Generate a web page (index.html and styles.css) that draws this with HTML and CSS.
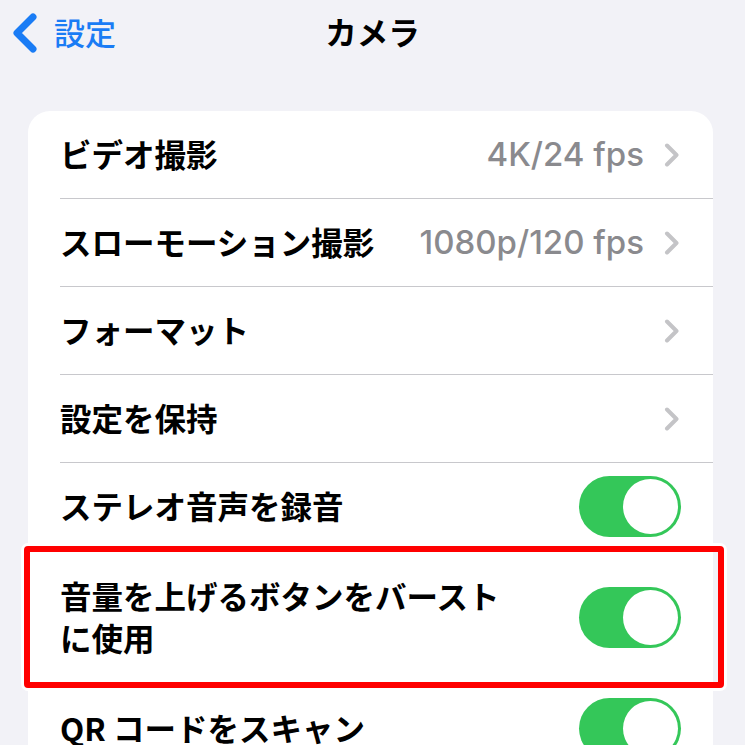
FILE: index.html
```html
<!DOCTYPE html>
<html lang="ja">
<head>
<meta charset="utf-8">
<link rel="stylesheet" href="styles.css">
</head>
<body>
<div class="screen">
  <header class="nav">
    <div class="nav-left">
      <svg class="back-icon" width="30" height="42" viewBox="10 10 30 42"><path d="M33 15 L17 31 L33 47" fill="none" stroke="#1a7cf5" stroke-width="7" stroke-linecap="round" stroke-linejoin="round"/></svg>
      <span class="back-label">設定</span>
    </div>
    <div class="nav-title">カメラ</div>
    <div class="nav-right"></div>
  </header>

  <section class="card">
    <div class="row">
      <span class="label">ビデオ撮影</span>
      <span class="value">4K/24 fps</span>
      <svg class="chev" width="16" height="24" viewBox="0 0 16 24"><path d="M3 2.5 L12.5 12 L3 21.5" fill="none" stroke="#c4c4c7" stroke-width="4" stroke-linecap="round" stroke-linejoin="round"/></svg>
    </div>
    <div class="row">
      <span class="label">スローモーション撮影</span>
      <span class="value">1080p/120 fps</span>
      <svg class="chev" width="16" height="24" viewBox="0 0 16 24"><path d="M3 2.5 L12.5 12 L3 21.5" fill="none" stroke="#c4c4c7" stroke-width="4" stroke-linecap="round" stroke-linejoin="round"/></svg>
    </div>
    <div class="row">
      <span class="label">フォーマット</span>
      <span class="value"></span>
      <svg class="chev" width="16" height="24" viewBox="0 0 16 24"><path d="M3 2.5 L12.5 12 L3 21.5" fill="none" stroke="#c4c4c7" stroke-width="4" stroke-linecap="round" stroke-linejoin="round"/></svg>
    </div>
    <div class="row">
      <span class="label">設定を保持</span>
      <span class="value"></span>
      <svg class="chev" width="16" height="24" viewBox="0 0 16 24"><path d="M3 2.5 L12.5 12 L3 21.5" fill="none" stroke="#c4c4c7" stroke-width="4" stroke-linecap="round" stroke-linejoin="round"/></svg>
    </div>
    <div class="row">
      <span class="label">ステレオ音声を録音</span>
      <span class="toggle"><span class="knob"></span></span>
    </div>
    <div class="row row-tall">
      <span class="label label-wrap">音量を上げるボタンをバースト<br>に使用</span>
      <span class="toggle"><span class="knob"></span></span>
      <span class="highlight"></span>
    </div>
    <div class="row">
      <span class="label">QR コードをスキャン</span>
      <span class="toggle"><span class="knob"></span></span>
    </div>
  </section>
</div>
</body>
</html>
```

FILE: styles.css
```css
html, body {
  margin: 0;
  padding: 0;
  background: #f2f2f7;
}
.screen {
  width: 745px;
  height: 745px;
  overflow: hidden;
  background: #f2f2f7;
  font-family: "Noto Sans CJK JP", "Noto Sans", sans-serif;
}
.nav {
  height: 66px;
  display: grid;
  grid-template-columns: 1fr auto 1fr;
  align-items: center;
}
.nav-left {
  display: flex;
  align-items: center;
  padding-left: 10px;
  gap: 14px;
}
.back-icon {
  display: block;
}
.back-label {
  color: #1a7cf5;
  font-size: 31px;
  font-weight: 500;
  line-height: 1;
  padding-bottom: 3px;
}
.nav-title {
  font-size: 31.5px;
  font-weight: 700;
  color: #000;
  line-height: 1;
  padding-bottom: 3px;
}
.card {
  margin: 45px 0 0 28px;
  width: 685px;
  background: #fff;
  border-radius: 22px 22px 0 0;
}
.row {
  position: relative;
  display: flex;
  align-items: center;
  margin-left: 32px;
  padding-right: 32px;
  height: 87px;
  border-bottom: 1px solid #c8c8cc;
}
.row:last-child {
  border-bottom: none;
}
.row-tall {
  height: 133px;
}
.label {
  flex: 1;
  font-size: 31.5px;
  font-weight: 600;
  color: #000;
  line-height: 42px;
  white-space: nowrap;
  padding-bottom: 4px;
}
.value {
  font-family: "Inter", "Roboto", sans-serif;
  font-size: 33px;
  font-weight: 500;
  color: #8a8a8e;
  margin-right: 20px;
  padding-bottom: 2px;
}
.chev {
  display: block;
  margin-right: 1px;
}
.toggle {
  width: 102px;
  height: 61px;
  border-radius: 31px;
  background: #34c759;
  display: flex;
  align-items: center;
  justify-content: flex-end;
  padding-right: 3px;
  box-sizing: border-box;
}
.knob {
  width: 55px;
  height: 55px;
  border-radius: 50%;
  background: #fff;
}
.highlight {
  position: absolute;
  left: -36px;
  right: -11px;
  top: -5px;
  bottom: -4px;
  border: 6px solid #ff0000;
  border-radius: 4px;
  box-shadow: 0 0 0 3px #fff;
  pointer-events: none;
}
```
